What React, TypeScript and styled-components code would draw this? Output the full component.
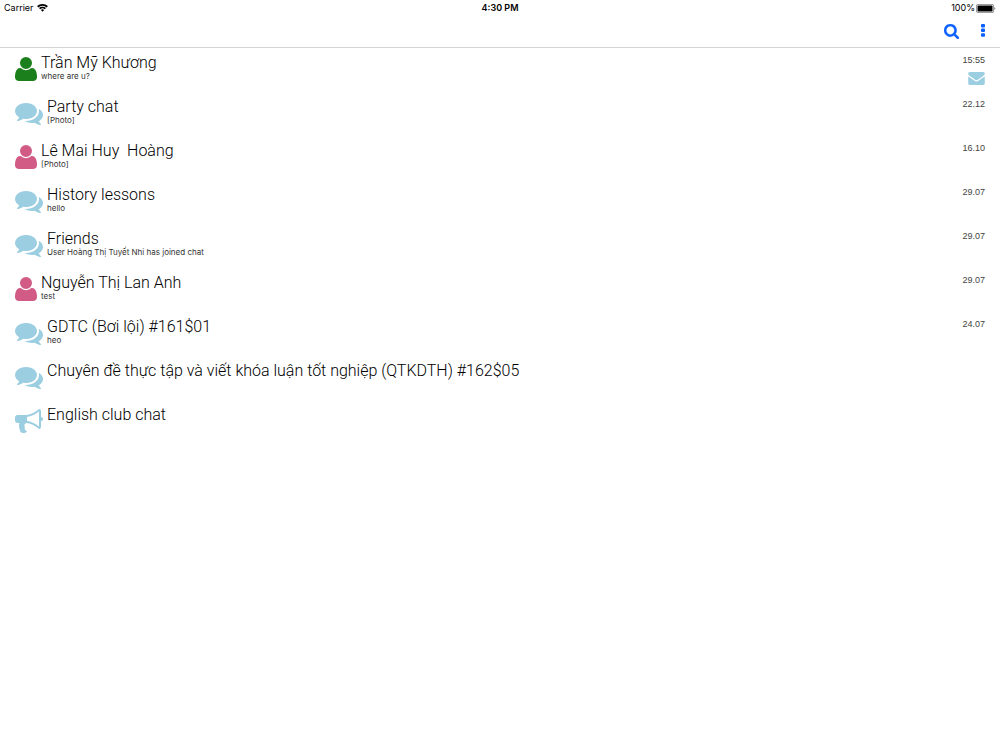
import React from "react";
import styled, { createGlobalStyle } from "styled-components";

const GlobalStyle = createGlobalStyle`
  *, *::before, *::after { box-sizing: border-box; }
  body {
    margin: 0;
    background: #fff;
    color: #000;
    font-family: Roboto, "Liberation Sans", Arial, sans-serif;
  }
`;

const colors = {
  accent: "#0a60ff",
  sky: "#9ccee1",
  green: "#1b7f1b",
  pink: "#d25b85",
  line: "#d4d4d6",
};

const StatusBar = styled.div`
  display: grid;
  grid-template-columns: 1fr auto 1fr;
  align-items: center;
  height: 16px;
  padding: 0 4px;
  font-family: Inter, sans-serif;
  font-size: 9px;
  line-height: 16px;
`;

const StatusGroup = styled.div<{ $end?: boolean }>`
  display: flex;
  align-items: center;
  gap: ${(p) => (p.$end ? 1 : 3)}px;
  justify-content: ${(p) => (p.$end ? "flex-end" : "flex-start")};
`;

const Clock = styled.time`
  font-weight: 600;
`;

const Toolbar = styled.header`
  display: flex;
  justify-content: flex-end;
  align-items: center;
  gap: 13px;
  height: 32px;
  padding: 0 9px 1px;
  border-bottom: 1px solid ${colors.line};
`;

const IconButton = styled.button<{ $width: number }>`
  display: flex;
  align-items: center;
  justify-content: center;
  width: ${(p) => p.$width}px;
  height: 28px;
  padding: 0;
  border: 0;
  background: none;
  color: ${colors.accent};
  cursor: pointer;
`;

const ChatList = styled.ul`
  margin: 0;
  padding: 0;
  list-style: none;
`;

const ChatRow = styled.li`
  display: flex;
  align-items: flex-start;
  height: 44px;
  padding: 5px 15px 0;
`;

const Avatar = styled.span<{ $color: string }>`
  display: flex;
  flex: none;
  padding-top: 2px;
  margin-right: 4px;
  color: ${(p) => p.$color};
`;

const ChatText = styled.div`
  flex: 1;
  min-width: 0;
`;

const ChatName = styled.h2`
  margin: 0;
  font-size: 16px;
  font-weight: 300;
  line-height: 19px;
  white-space: pre-wrap;
`;

const LastMessage = styled.p`
  margin: 0;
  font-family: Inter, sans-serif;
  font-size: 8px;
  line-height: 9px;
  color: #333;
`;

const Meta = styled.div`
  display: flex;
  flex-direction: column;
  align-items: flex-end;
  gap: 7px;
  padding-top: 2px;
  color: ${colors.sky};
`;

const Stamp = styled.time`
  font-family: "Liberation Sans", Arial, sans-serif;
  font-size: 9px;
  line-height: 10px;
  color: #444;
`;

const Svg = styled.svg`
  display: block;
  fill: currentColor;
`;

const UserIcon = () => (
  <Svg width="22" height="28" viewBox="0 0 1408 1792" aria-hidden="true">
    <g transform="translate(0 1536) scale(1 -1)">
      <path d="M1408 131q0 -120 -73 -189.500t-194 -69.500h-874q-121 0 -194 69.500t-73 189.500q0 53 3.500 103.500t14 109t26.500 108.500t43 97.500t62 81t85.500 53.500t111.500 20q9 0 42 -21.500t74.500 -48t108 -48t133.500 -21.500t133.500 21.500t108 48t74.500 48t42 21.500q61 0 111.500 -20t85.500 -53.500t62 -81t43 -97.500t26.500 -108.500t14 -109t3.500 -103.500zM1088 1024q0 -159 -112.500 -271.500t-271.500 -112.500t-271.500 112.500t-112.500 271.500t112.500 271.500t271.500 112.500t271.500 -112.500t112.500 -271.500z" />
    </g>
  </Svg>
);

const CommentsIcon = () => (
  <Svg width="28" height="28" viewBox="0 0 1792 1792" aria-hidden="true">
    <path d="M1408 768q0 139-94 257t-256.5 186.5-353.5 68.5q-86 0-176-16-124 88-278 128-36 9-86 16h-3q-11 0-20.5-8t-11.5-21q-1-3-1-6.5t.5-6.5 2-6l2.500-5 3.500-5.500 4-5 4.500-5 4-4.500q5-6 23-25t26-29.500 22.500-29 25-38.500 20.500-44q-124-72-195-177t-71-224q0-139 94-257t256.500-186.500 353.500-68.500 353.500 68.500 256.500 186.500 94 257zm384 256q0 120-71 224.500t-195 176.500q10 24 20.500 44t25 38.500 22.500 29 26 29.500 23 25q1 1 4 4.500t4.500 5 4 5 3.500 5.500l2.500 5 2 6 .5 6.500-1 6.500q-3 14-13 22t-22 7q-50-7-86-16-154-40-278-128-90 16-176 16-271 0-472-132 58 4 88 4 161 0 309-45t264-129q125-92 192-212t67-254q0-77-23-152 129 71 204 178t75 230z" />
  </Svg>
);

const BullhornIcon = () => (
  <Svg width="28" height="28" viewBox="0 0 1792 1792" aria-hidden="true">
    <path d="M1664 640q53 0 90.5 37.5t37.5 90.5-37.5 90.5-90.5 37.5v384q0 52-38 90t-90 38q-417-347-812-380-58 19-91 66t-31 100.5 40 92.5q-20 33-23 65.5t6 58 33.5 55 48 50 61.5 50.5q-29 58-111.5 83t-168.5 11.5-132-55.5q-7-23-29.5-87.5t-32-94.5-23-89-15-101 3.5-98.5 22-110.5h-122q-66 0-113-47t-47-113v-192q0-66 47-113t113-47h480q435 0 896-384 52 0 90 38t38 90v384zm-128 604v-954q-394 302-768 343v270q377 42 768 341z" />
  </Svg>
);

const EnvelopeIcon = () => (
  <Svg width="17" height="13" viewBox="0 256 1792 1408" role="img" aria-label="Unread message">
    <path d="M1792 710v794q0 66-47 113t-113 47h-1472q-66 0-113-47t-47-113v-794q44 49 101 87 362 246 497 345 57 42 92.5 65.5t94.5 48 110 24.5h2q51 0 110-24.5t94.5-48 92.5-65.5q170-123 498-345 57-39 100-87zm0-294q0 79-49 151t-122 123q-376 261-468 325-10 7-42.5 31t-54 38.5-52 32.5-57.5 27-50 9h-2q-23 0-50-9t-57.5-27-52-32.5-54-38.5-42.5-31q-91-64-262-182.5t-205-142.5q-62-42-117-115.5t-55-136.5q0-78 41.5-130t118.5-52h1472q65 0 112.5 47t47.5 113z" />
  </Svg>
);

const SearchIcon = () => (
  <Svg width="15" height="15" viewBox="64 128 1664 1664" aria-hidden="true">
    <path
      d="M1216 832q0-185-131.5-316.5t-316.5-131.5-316.5 131.5-131.5 316.5 131.5 316.5 316.5 131.5 316.5-131.5 131.5-316.5zm512 832q0 52-38 90t-90 38q-54 0-90-38l-343-342q-179 124-399 124-143 0-273.5-55.5t-225-150-150-225-55.5-273.5 55.5-273.5 150-225 225-150 273.5-55.5 273.5 55.5 225 150 150 225 55.5 273.5q0 220-124 399l343 343q37 37 37 90z"
      stroke="currentColor"
      strokeWidth="30"
    />
  </Svg>
);

const MoreIcon = () => (
  <Svg width="4" height="14" viewBox="0 0 4 14" aria-hidden="true">
    <rect width="4" height="3.500" rx="1" />
    <rect y="4.600" width="4" height="3.500" rx="1" />
    <rect y="9.200" width="4" height="3.500" rx="1" />
  </Svg>
);

const WifiIcon = () => (
  <Svg width="11" height="8" viewBox="0 0 11 8" aria-hidden="true">
    <path d="M5.5 0C3.4 0 1.5.8.1 2.1l1.2 1.3a6.1 6.1 0 0 1 8.4 0l1.2-1.3A7.9 7.9 0 0 0 5.5 0Z" />
    <path d="M5.5 2.7c-1.3 0-2.6.5-3.5 1.4l1.2 1.2a3.3 3.3 0 0 1 4.6 0L9 4.100A5 5 0 0 0 5.500 2.700Z" />
    <path d="M5.500 5.300c-.6 0-1.200.2-1.600.7L5.500 7.800l1.600-1.800c-.4-.5-1-.7-1.600-.7Z" />
  </Svg>
);

const BatteryIcon = () => (
  <Svg width="20" height="9" viewBox="0 0 20 9" aria-hidden="true">
    <rect x=".4" y=".4" width="17.200" height="8.200" rx="1.500" fill="#fff" stroke="#777" strokeWidth=".8" />
    <rect x="1.500" y="1.500" width="15" height="6" rx=".5" />
    <path d="M18.400 3.200c.8.2 1 .7 1 1.300s-.2 1.100-1 1.300Z" fill="#777" />
  </Svg>
);

type Kind = "online" | "offline" | "group" | "channel";

const avatars: Record<Kind, { color: string; Icon: React.FC }> = {
  online: { color: colors.green, Icon: UserIcon },
  offline: { color: colors.pink, Icon: UserIcon },
  group: { color: colors.sky, Icon: CommentsIcon },
  channel: { color: colors.sky, Icon: BullhornIcon },
};

interface Chat {
  kind: Kind;
  name: string;
  message?: string;
  time?: string;
  unread?: boolean;
}

const chats: Chat[] = [
  { kind: "online", name: "Trần Mỹ Khương", message: "where are u?", time: "15:55", unread: true },
  { kind: "group", name: "Party chat", message: "[Photo]", time: "22.12" },
  { kind: "offline", name: "Lê Mai Huy  Hoàng", message: "[Photo]", time: "16.10" },
  { kind: "group", name: "History lessons", message: "hello", time: "29.07" },
  { kind: "group", name: "Friends", message: "User Hoàng Thị Tuyết Nhi has joined chat", time: "29.07" },
  { kind: "offline", name: "Nguyễn Thị Lan Anh", message: "test", time: "29.07" },
  { kind: "group", name: "GDTC (Bơi lội) #161$01", message: "heo", time: "24.07" },
  { kind: "group", name: "Chuyên đề thực tập và viết khóa luận tốt nghiệp (QTKDTH) #162$05" },
  { kind: "channel", name: "English club chat" },
];

export default function App() {
  return (
    <>
      <GlobalStyle />
      <StatusBar>
        <StatusGroup>
          <span>Carrier</span>
          <WifiIcon />
        </StatusGroup>
        <Clock>4:30 PM</Clock>
        <StatusGroup $end>
          <span>100%</span>
          <BatteryIcon />
        </StatusGroup>
      </StatusBar>
      <Toolbar>
        <IconButton type="button" aria-label="Search" $width={22}>
          <SearchIcon />
        </IconButton>
        <IconButton type="button" aria-label="More options" $width={16}>
          <MoreIcon />
        </IconButton>
      </Toolbar>
      <main>
        <ChatList>
          {chats.map(({ kind, name, message, time, unread }) => {
            const { color, Icon } = avatars[kind];
            return (
              <ChatRow key={name}>
                <Avatar $color={color}>
                  <Icon />
                </Avatar>
                <ChatText>
                  <ChatName>{name}</ChatName>
                  {message && <LastMessage>{message}</LastMessage>}
                </ChatText>
                <Meta>
                  {time && <Stamp>{time}</Stamp>}
                  {unread && <EnvelopeIcon />}
                </Meta>
              </ChatRow>
            );
          })}
        </ChatList>
      </main>
    </>
  );
}
